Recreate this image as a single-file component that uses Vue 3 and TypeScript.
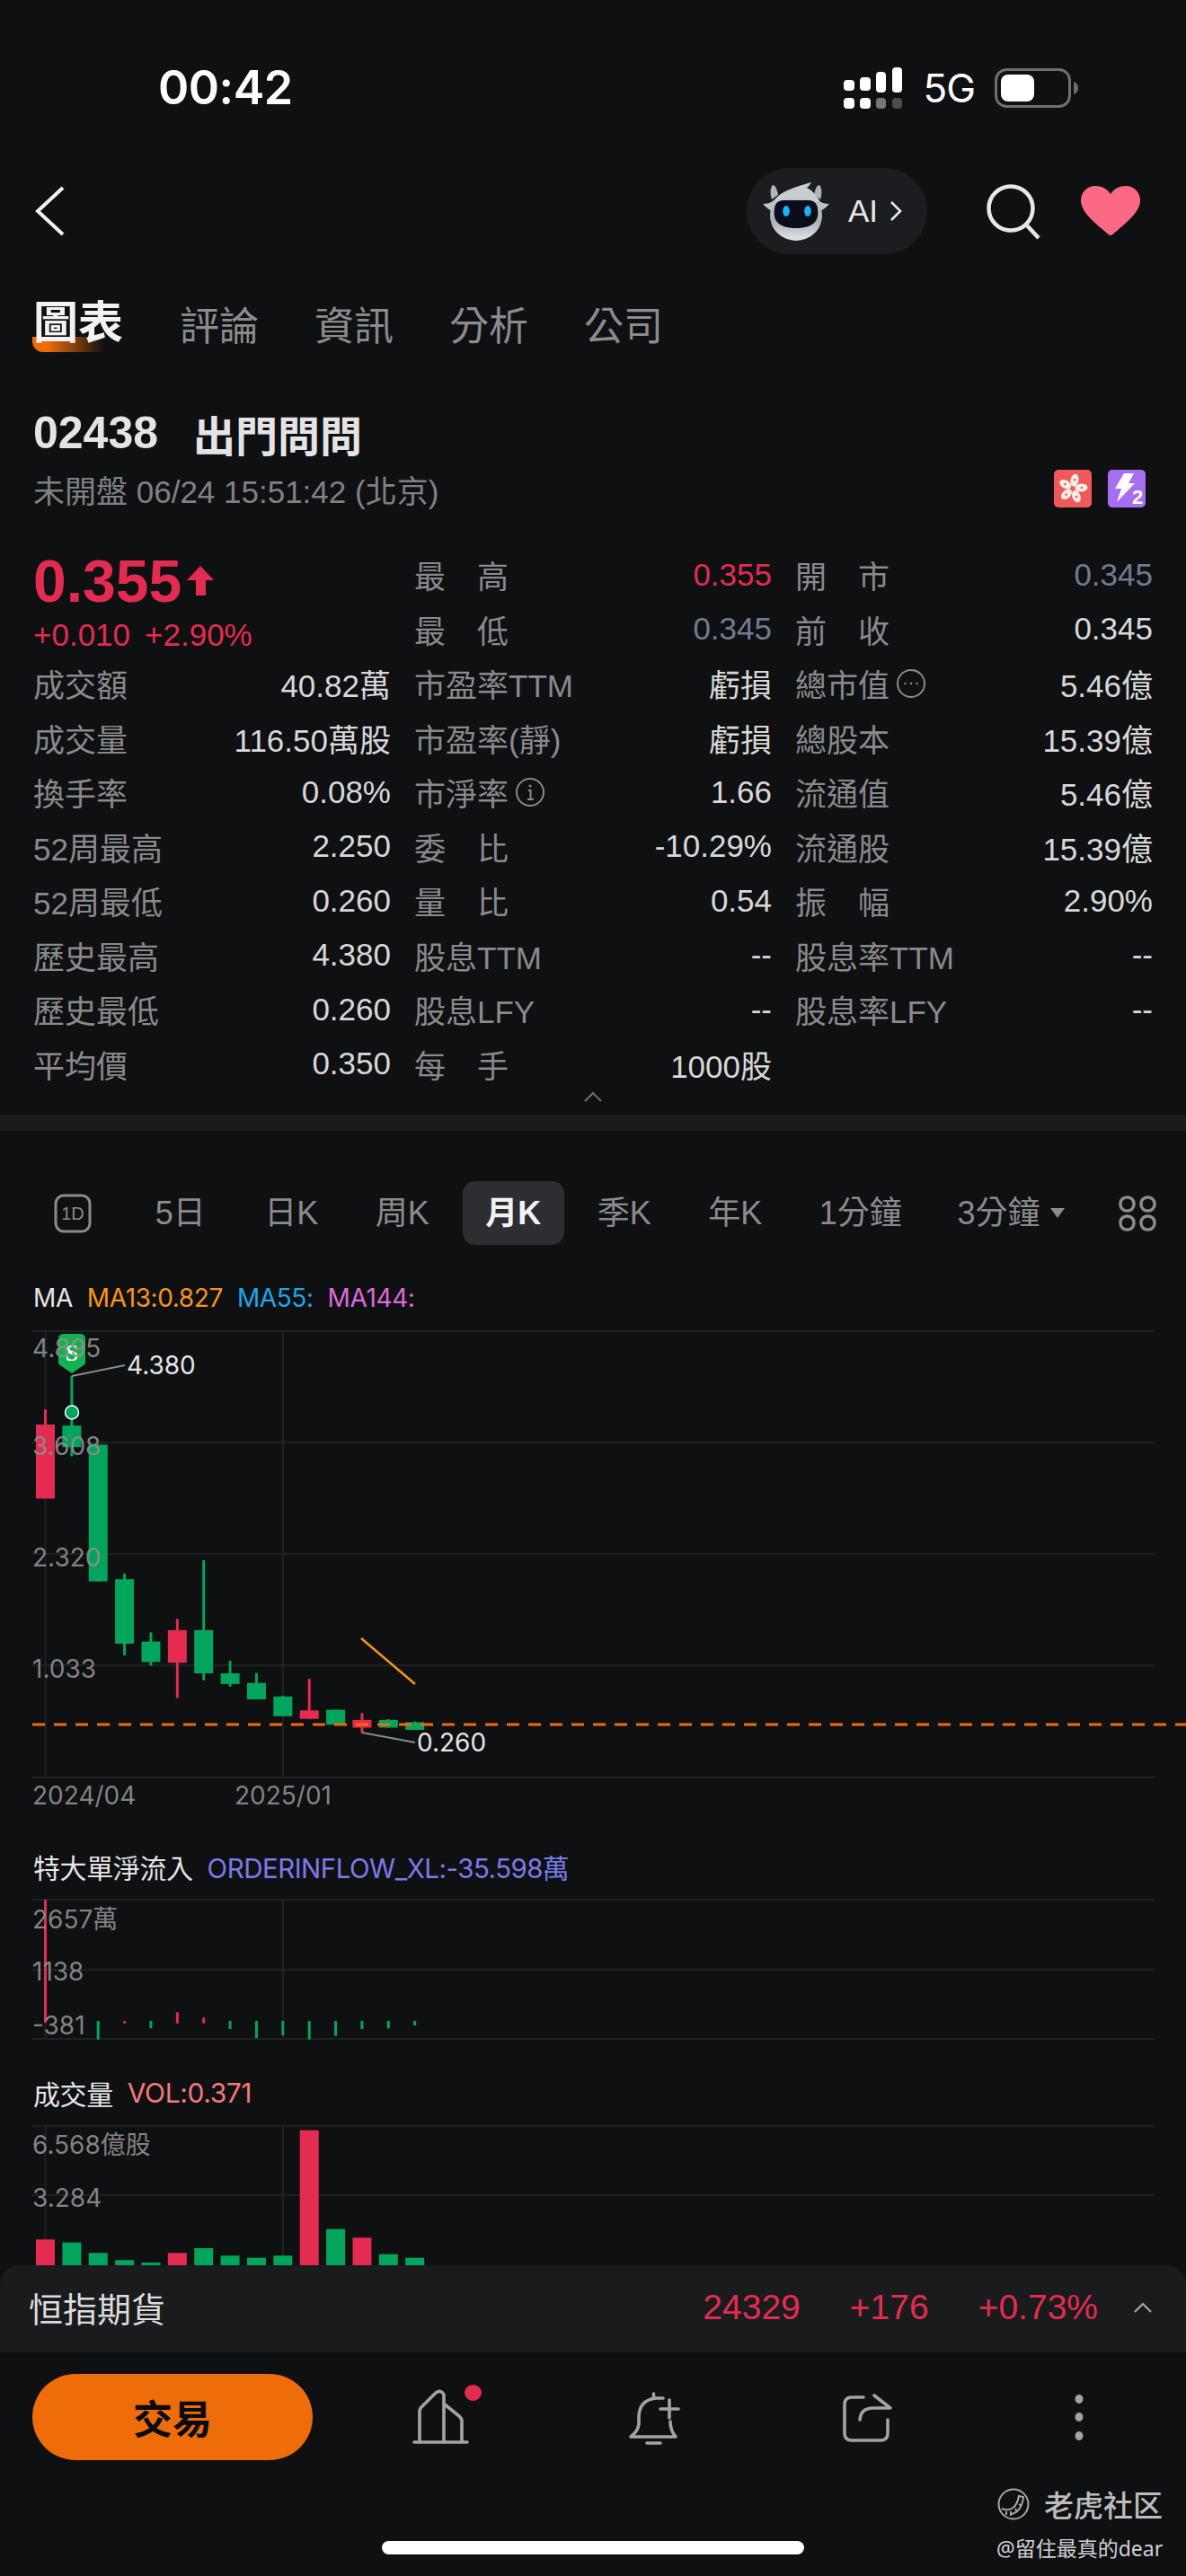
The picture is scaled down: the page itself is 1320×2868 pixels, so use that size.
<script setup lang="ts">
// Stock detail screen: quote header, stats table and monthly K chart.

type Tone = 'up' | 'down' | '';

interface Stat {
  label?: string;
  value?: string;
  tone?: Tone;
  icon?: 'more' | 'info';
  price?: boolean;
}

interface Candle {
  top: number;
  bottom: number;
  high: number;
  low: number;
  up: boolean;
}

const RED = '#e32c4f';
const GREEN = '#02a55b';

const tabs = ['評論', '資訊', '分析', '公司'];
const periods = ['5日', '日K', '周K', '月K', '季K', '年K', '1分鐘'];

const stats: Stat[] = [
  { price: true },
  { label: '最　高', value: '0.355', tone: 'up' },
  { label: '開　市', value: '0.345', tone: 'down' },
  { label: '最　低', value: '0.345', tone: 'down' },
  { label: '前　收', value: '0.345' },
  { label: '成交額', value: '40.82萬' },
  { label: '市盈率TTM', value: '虧損' },
  { label: '總市值', value: '5.46億', icon: 'more' },
  { label: '成交量', value: '116.50萬股' },
  { label: '市盈率(靜)', value: '虧損' },
  { label: '總股本', value: '15.39億' },
  { label: '換手率', value: '0.08%' },
  { label: '市淨率', value: '1.66', icon: 'info' },
  { label: '流通值', value: '5.46億' },
  { label: '52周最高', value: '2.250' },
  { label: '委　比', value: '-10.29%' },
  { label: '流通股', value: '15.39億' },
  { label: '52周最低', value: '0.260' },
  { label: '量　比', value: '0.54' },
  { label: '振　幅', value: '2.90%' },
  { label: '歷史最高', value: '4.380' },
  { label: '股息TTM', value: '--' },
  { label: '股息率TTM', value: '--' },
  { label: '歷史最低', value: '0.260' },
  { label: '股息LFY', value: '--' },
  { label: '股息率LFY', value: '--' },
  { label: '平均價', value: '0.350' },
  { label: '每　手', value: '1000股' },
  {},
];

// x centre of the nth month on all three panels
const barX = (i: number): number => 50.5 + i * 29.37;

const candles: Candle[] = [
  { top: 1587, bottom: 1669.4, high: 1570.2, low: 1669.4, up: true },
  { top: 1588.2, bottom: 1612.2, high: 1532.7, low: 1622.4, up: false },
  { top: 1609.4, bottom: 1761.6, high: 1609.4, low: 1761.6, up: false },
  { top: 1759.2, bottom: 1831, high: 1753, low: 1844, up: false },
  { top: 1828.6, bottom: 1851.4, high: 1818.4, low: 1855.5, up: false },
  { top: 1815.9, bottom: 1852.2, high: 1803.3, low: 1891.4, up: true },
  { top: 1815.9, bottom: 1864, high: 1738, low: 1871.8, up: false },
  { top: 1864, bottom: 1875.9, high: 1850.2, low: 1878.8, up: false },
  { top: 1874.7, bottom: 1893, high: 1863.7, low: 1893, up: false },
  { top: 1889.8, bottom: 1911.8, high: 1889, low: 1911.8, up: false },
  { top: 1905.3, bottom: 1914.7, high: 1870.2, low: 1914.7, up: true },
  { top: 1904.5, bottom: 1921.2, high: 1904.5, low: 1921.2, up: false },
  { top: 1915.9, bottom: 1924.5, high: 1908.2, low: 1930.6, up: true },
  { top: 1915.9, bottom: 1924.5, high: 1915, low: 1924.5, up: false },
  { top: 1918.4, bottom: 1927, high: 1917.6, low: 1927, up: false },
];

const inflow = [
  { i: 0, top: 2116, bottom: 2253, up: true },
  { i: 2, top: 2251, bottom: 2271.7, up: false },
  { i: 3, top: 2251, bottom: 2253.7, up: true },
  { i: 4, top: 2251, bottom: 2259.3, up: false },
  { i: 5, top: 2241.3, bottom: 2253.7, up: true },
  { i: 6, top: 2247.3, bottom: 2253.7, up: true },
  { i: 7, top: 2251, bottom: 2260, up: false },
  { i: 8, top: 2251, bottom: 2270.3, up: false },
  { i: 9, top: 2251, bottom: 2267, up: false },
  { i: 10, top: 2251, bottom: 2271.7, up: false },
  { i: 11, top: 2251, bottom: 2267.7, up: false },
  { i: 12, top: 2251, bottom: 2260, up: false },
  { i: 13, top: 2251, bottom: 2259.3, up: false },
  { i: 14, top: 2251, bottom: 2256, up: false },
];

const volumeTops = [
  2494.3, 2497.7, 2509.3, 2517.3, 2520, 2509.3, 2504, 2512.3, 2514.7, 2512.3, 2372.7, 2482.7,
  2492.3, 2510.7, 2514.7,
];
const VOLUME_BASE = 2523;
</script>

<template>
  <div class="page">
    <header class="status">
      <span class="clock">00:42</span>
      <div class="status-right">
        <svg class="signal" width="66" height="46" viewBox="0 0 66 46" fill="#fff">
          <rect x="0" y="14" width="12" height="12" rx="4" />
          <rect x="18" y="11" width="12" height="15" rx="4" />
          <rect x="36" y="5" width="11" height="23" rx="4" />
          <rect x="54" y="0" width="11" height="28" rx="4" />
          <rect x="0" y="34" width="12" height="12" rx="4" />
          <rect x="18" y="34" width="12" height="12" rx="4" />
          <rect x="36" y="34" width="11" height="12" rx="4" fill="#767676" />
          <rect x="54" y="34" width="11" height="12" rx="4" fill="#4c4c4c" />
        </svg>
        <span class="net">5G</span>
        <svg width="94" height="44" viewBox="0 0 94 44">
          <rect x="1.5" y="1.5" width="82" height="41" rx="12" fill="none" stroke="#6f6f6f" stroke-width="3" />
          <rect x="7" y="7" width="37" height="30" rx="8" fill="#fff" />
          <path d="M88 15c3 1 5 3.5 5 7s-2 6-5 7z" fill="#6f6f6f" />
        </svg>
      </div>
    </header>

    <nav class="topbar">
      <svg class="back" width="34" height="56" viewBox="0 0 34 56" fill="none" stroke="#f2f2f2" stroke-width="4">
        <path d="M31 2 3 28l28 26" />
      </svg>
      <div class="ai-pill">
        <svg width="76" height="66" viewBox="0 0 76 66">
          <defs>
            <linearGradient id="helmet" x1="0" y1="0" x2="0" y2="1">
              <stop offset="0" stop-color="#c9ced3" />
              <stop offset="0.6" stop-color="#aab0b6" />
              <stop offset="1" stop-color="#e3e6e9" />
            </linearGradient>
          </defs>
          <path d="M12 4c3 0 5 5 6 11L11 20C9 14 9 7 12 4zM64 4c-3 0-5 5-6 11l7 5c2-6 2-13-1-16z" fill="#aeb4ba" />
          <path d="M1 25c4 0 9-1 12-4l2 14C9 32 4 29 1 25zM75 25c-4 0-9-1-12-4l-2 14c6-3 11-6 14-10z" fill="#bfc4c9" />
          <ellipse cx="38" cy="38" rx="29" ry="28" fill="url(#helmet)" />
          <path d="M12 24C18 12 34 7 55 1c-2 4-4 5-5 6 6 3 12 9 15 17-14-7-38-7-53 0z" fill="#c9ced3" />
          <path d="M14 31c0-6 4-10 10-10h28c6 0 10 4 10 10 2 12-4 21-24 21S12 43 14 31z" fill="#0b0d1c" />
          <ellipse cx="27" cy="33" rx="3.8" ry="6" fill="#18b4f5" />
          <ellipse cx="51" cy="33" rx="3.8" ry="6" fill="#18b4f5" />
        </svg>
        <span class="ai-text">AI</span>
        <svg width="14" height="24" viewBox="0 0 14 24" fill="none" stroke="#e8e8e8" stroke-width="2.6">
          <path d="M2 2 12 12 2 22" />
        </svg>
      </div>
      <svg class="search" width="60" height="62" viewBox="0 0 60 62" fill="none" stroke="#e8e8e8" stroke-width="4.5">
        <circle cx="27" cy="27" r="24.5" />
        <path d="m44 45 14 15" />
      </svg>
      <svg class="heart" width="66" height="56" viewBox="0 0 66 56">
        <path
          d="M33 55c-1 0-2-.6-3-1.500C17 42 0 30 0 16 0 7 7 0 16 0c7 0 13 3 17 9 4-6 10-9 17-9 9 0 16 7 16 16 0 14-17 26-30 37.500-1 .9-2 1.500-3 1.500z"
          fill="#fb6982"
        />
      </svg>
    </nav>

    <div class="tabs">
      <span class="tab-active">
        <i class="tab-mark"></i>
        <b>圖表</b>
      </span>
      <span v-for="t in tabs" :key="t" class="tab">{{ t }}</span>
    </div>

    <section class="title">
      <div class="name"><span class="code">02438</span><span>出門問問</span></div>
      <div class="sub">
        <span>未開盤 06/24 15:51:42 (北京)</span>
        <div class="badges">
          <svg width="42" height="42" viewBox="0 0 42 42">
            <rect width="42" height="42" rx="5" fill="#f0595a" />
            <g fill="#fbeee8">
              <ellipse v-for="a in [0, 72, 144, 216, 288]" :key="a" cx="21" cy="11.5" rx="4.5" ry="7"
                :transform="`rotate(${a + 12} 21 21)`" />
            </g>
            <g fill="#f0595a">
              <circle v-for="a in [0, 72, 144, 216, 288]" :key="a" cx="21" cy="11" r="1.3"
                :transform="`rotate(${a + 12} 21 21)`" />
            </g>
          </svg>
          <svg width="42" height="42" viewBox="0 0 42 42">
            <rect width="42" height="42" rx="5" fill="#a56ff0" />
            <path d="M18 4h11l-6 11h7L10 36l5-15H8z" fill="#fff" />
            <text x="27" y="38" class="badge-num">2</text>
          </svg>
        </div>
      </div>
    </section>

    <section class="stats">
      <template v-for="(s, i) in stats" :key="i">
        <div v-if="s.price" class="price-cell">
          <div class="price">
            <span>0.355</span>
            <svg width="30" height="33" viewBox="0 0 30 33" fill="#e32c4f">
              <path d="M15 0 30 16H21V33H10V16H0z" />
            </svg>
          </div>
          <div class="change"><span>+0.010</span><span>+2.90%</span></div>
        </div>
        <div v-else class="cell">
          <span class="label">
            {{ s.label }}
            <svg v-if="s.icon === 'more'" class="hint" width="34" height="34" viewBox="0 0 34 34" fill="none" stroke="#8a8a8c" stroke-width="2">
              <circle cx="17" cy="17" r="15" />
              <circle cx="10.5" cy="17" r="1.2" fill="#8a8a8c" stroke="none" />
              <circle cx="17" cy="17" r="1.2" fill="#8a8a8c" stroke="none" />
              <circle cx="23.5" cy="17" r="1.2" fill="#8a8a8c" stroke="none" />
            </svg>
            <svg v-if="s.icon === 'info'" class="hint" width="34" height="34" viewBox="0 0 34 34" fill="none" stroke="#8a8a8c" stroke-width="2">
              <circle cx="17" cy="17" r="15" />
              <path d="M15 15h2.500v10M14 25h7" />
              <circle cx="17" cy="10" r="1.5" fill="#8a8a8c" stroke="none" />
            </svg>
          </span>
          <span class="value" :class="s.tone">{{ s.value }}</span>
        </div>
      </template>
    </section>

    <div class="collapse">
      <svg width="22" height="12" viewBox="0 0 22 12" fill="none" stroke="#6d6e70" stroke-width="2">
        <path d="m2 11 9-9 9 9" />
      </svg>
    </div>
    <div class="band"></div>

    <div class="periods">
      <svg class="period-1d" width="42" height="44" viewBox="0 0 42 44" fill="none" stroke="#8a8b8d" stroke-width="3">
        <rect x="2" y="2" width="38" height="40" rx="9" />
        <text x="21" y="29" class="oned">1D</text>
      </svg>
      <span v-for="p in periods" :key="p" class="period" :class="{ on: p === '月K' }">{{ p }}</span>
      <span class="period more">3分鐘<i class="tri"></i></span>
      <svg class="period-grid" width="42" height="40" viewBox="0 0 42 40" fill="none" stroke="#8a8b8d" stroke-width="3.5">
        <rect x="2" y="2" width="15" height="15" rx="7" />
        <rect x="25" y="2" width="15" height="15" rx="7" />
        <rect x="2" y="23" width="15" height="15" rx="7" />
        <rect x="25" y="23" width="15" height="15" rx="7" />
      </svg>
    </div>

    <div class="legend first">
      <span class="white">MA</span>
      <span class="orange">MA13:0.827</span>
      <span class="blue">MA55:</span>
      <span class="pink">MA144:</span>
    </div>
    <svg class="chart" width="1320" height="578" viewBox="0 1472 1320 578">
      <g stroke="#1e2022" stroke-width="2">
        <path v-for="y in [1483, 1607, 1731, 1855, 1980]" :key="y" :d="`M36 ${y}H1285`" />
        <path d="M50.5 1483V1980M315 1483V1980" />
      </g>
      <g v-for="(c, i) in candles" :key="i" :fill="c.up ? RED : GREEN">
        <rect :x="barX(i) - 1.5" :y="c.high" width="3" :height="c.low - c.high" />
        <rect :x="barX(i) - 10.5" :y="c.top" width="21" :height="c.bottom - c.top" />
      </g>
      <path d="M36 1921H1320" stroke="#f46a0a" stroke-width="3" stroke-dasharray="14 10" />
      <path d="M402 1825 462 1876" stroke="#f7941d" stroke-width="2.5" />
      <path d="M80 1533 139 1521M403 1930 462 1941" stroke="#8a8a8a" stroke-width="2" fill="none" />
      <path d="M65 1492q0-6 6-6h18q6 0 6 6v26q0 2-2 3l-13 9-13-9q-2-1-2-3z" fill="#12b24f" />
      <text x="80" y="1516" class="s-mark">S</text>
      <circle cx="80" cy="1573.5" r="7.5" fill="#02a55b" stroke="#fff" stroke-width="1.5" />
      <g class="axis">
        <text x="36" y="1512">4.895</text>
        <text x="36" y="1621">3.608</text>
        <text x="36" y="1745">2.320</text>
        <text x="36" y="1869">1.033</text>
        <text x="36" y="2010">2024/04</text>
        <text x="315" y="2010" text-anchor="middle">2025/01</text>
      </g>
      <text x="141" y="1531" class="mark">4.380</text>
      <text x="464" y="1951" class="mark">0.260</text>
    </svg>

    <div class="legend second">
      <span class="white">特大單淨流入</span>
      <span class="violet">ORDERINFLOW_XL:-35.598萬</span>
    </div>
    <svg class="chart" width="1320" height="190" viewBox="0 2110 1320 190">
      <g stroke="#1e2022" stroke-width="2">
        <path v-for="y in [2116, 2194, 2271]" :key="y" :d="`M36 ${y}H1285`" />
        <path d="M50.5 2116V2271M315 2116V2271" />
      </g>
      <rect v-for="b in inflow" :key="b.i" :x="barX(b.i) - 1.5" :y="b.top" width="3" :height="b.bottom - b.top" :fill="b.up ? RED : GREEN" />
      <g class="axis">
        <text x="36" y="2148">2657萬</text>
        <text x="36" y="2206">1138</text>
        <text x="36" y="2266">-381</text>
      </g>
    </svg>

    <div class="legend third">
      <span class="white">成交量</span>
      <span class="salmon">VOL:0.371</span>
    </div>
    <svg class="chart" width="1320" height="165" viewBox="0 2358 1320 165">
      <g stroke="#1e2022" stroke-width="2">
        <path v-for="y in [2368, 2445]" :key="y" :d="`M36 ${y}H1285`" />
        <path d="M50.5 2368V2523M315 2368V2523" />
      </g>
      <rect v-for="(t, i) in volumeTops" :key="i" :x="barX(i) - 10.5" :y="t" width="21" :height="VOLUME_BASE - t"
        :fill="[0, 5, 10, 12].includes(i) ? RED : GREEN" />
      <g class="axis">
        <text x="36" y="2399">6.568億股</text>
        <text x="36" y="2458">3.284</text>
      </g>
    </svg>

    <div class="futures">
      <span class="fut-name">恒指期貨</span>
      <span class="fut-nums">
        <span>24329</span>
        <span>+176</span>
        <span>+0.73%</span>
      </span>
      <svg width="20" height="12" viewBox="0 0 20 12" fill="none" stroke="#a9aaac" stroke-width="2">
        <path d="m1 11 9-9 9 9" />
      </svg>
    </div>

    <footer class="toolbar">
      <button class="trade">交易</button>
      <svg class="tool-svg" width="1320" height="100" viewBox="0 2640 1320 100" fill="none" stroke="#a3a3a3" stroke-width="3.6" stroke-linecap="round" stroke-linejoin="round">
        <path d="M461 2720H520M467 2719V2685q0-2 2-4l16-16q6-4 9 2V2719M495 2678l16 13q3 3 3 5V2719" />
        <ellipse cx="526.5" cy="2665" rx="9.5" ry="9" fill="#e32c4f" stroke="none" />
        <path d="M727.5 2666V2671M738 2671H730Q712 2673 711 2691V2700Q710 2708 702 2714H752Q746 2707 746 2697M745 2673V2693M735 2683H755M720 2721H735" />
        <path d="M961 2670H948Q940 2670 940 2678V2710Q940 2718 948 2718H980Q988 2718 988 2710V2695M973 2668 991 2682H972Q958 2682 957 2695" />
        <g fill="#a3a3a3" stroke="none">
          <ellipse cx="1201" cy="2672" rx="4.5" ry="5" />
          <ellipse cx="1201" cy="2692" rx="4.5" ry="5" />
          <ellipse cx="1201" cy="2713" rx="4.5" ry="5" />
        </g>
      </svg>
    </footer>

    <div class="watermark">
      <div class="wm-top">
        <svg width="36" height="38" viewBox="0 0 36 38" fill="none" stroke="#a6a6a6" stroke-width="2">
          <circle cx="18" cy="19" r="16.5" />
          <path d="M5 24c10 4 17-2 19-14l5 1c-1 11-7 19-15 19" />
          <path d="M10 27v4M15 27v5M20 24l2 4M24 19l3 2" />
        </svg>
        <span>老虎社区</span>
      </div>
      <div class="wm-user">@留住最真的dear</div>
    </div>
    <div class="home-bar"></div>
  </div>
</template>

<style>
html,
body {
  margin: 0;
  background: #0f1012;
}
</style>

<style scoped>
.page {
  position: relative;
  width: 1320px;
  height: 2868px;
  overflow: hidden;
  background: #0f1012;
  color: #d8d8d8;
  font-family: 'Liberation Sans', 'Noto Sans CJK TC', sans-serif;
}
.status {
  height: 179px;
  padding-top: 8px;
  display: flex;
  align-items: center;
  justify-content: space-between;
  padding-left: 176px;
  padding-right: 119px;
}
.clock {
  font-family: Inter, sans-serif;
  font-size: 52px;
  font-weight: 600;
  letter-spacing: -0.5px;
  color: #fff;
}
.status-right {
  display: flex;
  align-items: center;
}
.signal {
  margin-right: 22px;
}
.net {
  font-family: Inter, sans-serif;
  font-size: 44px;
  color: #fff;
  margin-right: 22px;
  letter-spacing: -1px;
}
.topbar {
  height: 96px;
  display: flex;
  align-items: center;
  padding-left: 39px;
}
.ai-pill {
  margin-left: 758px;
  width: 201px;
  height: 96px;
  border-radius: 48px;
  background: #1c1d20;
  display: flex;
  align-items: center;
  padding-left: 17px;
  box-sizing: border-box;
}
.ai-text {
  margin-left: 20px;
  margin-right: 13px;
  font-size: 35px;
  color: #e8e8e8;
}
.search {
  margin-left: 66px;
  margin-top: 2px;
}
.heart {
  margin-left: 45px;
}
.tabs {
  margin-top: 47px;
  height: 60px;
  margin-bottom: 62px;
  display: flex;
  align-items: center;
  gap: 62px;
  padding-left: 37px;
}
.tab-active {
  position: relative;
  font-size: 50px;
  line-height: 60px;
  color: #f2f2f2;
  margin-right: 1px;
}
.tab-active b {
  position: relative;
  font-weight: 700;
}
.tab-mark {
  position: absolute;
  left: -1px;
  top: 45px;
  width: 80px;
  height: 17px;
  border-radius: 0 0 0 12px;
  background: linear-gradient(90deg, #ee6c0a 20%, rgba(238, 108, 10, 0));
}
.tab {
  font-size: 44px;
  color: #8b8c8e;
}
.title {
  padding: 0 45px 0 37px;
  margin-top: -1px;
  margin-bottom: 1px;
}
.name {
  height: 62px;
  display: flex;
  align-items: center;
  gap: 39px;
  font-size: 47px;
  font-weight: 700;
  color: #e4e4e4;
}
.code {
  font-size: 50px;
}
.sub {
  height: 62px;
  display: flex;
  align-items: center;
  justify-content: space-between;
  font-size: 35px;
  color: #808184;
}
.badges {
  display: flex;
  gap: 18px;
}
.badge-num {
  font-size: 22px;
  font-weight: 700;
  fill: #fff;
}
.stats {
  margin-top: 34.5px;
  padding: 0 35px 0 37px;
  display: grid;
  grid-template-columns: 398px 398px 398px;
  column-gap: 26px;
  grid-auto-rows: 60.5px;
  font-size: 35px;
}
.price-cell {
  grid-row: span 2;
}
.price {
  display: flex;
  align-items: center;
  gap: 6px;
  height: 74px;
  font-size: 66px;
  font-weight: 700;
  color: #e32c4f;
}
.change {
  display: flex;
  gap: 16px;
  margin-top: 1px;
  line-height: 44px;
  color: #e32c4f;
  font-size: 35px;
}
.cell {
  display: flex;
  align-items: center;
  justify-content: space-between;
  white-space: nowrap;
}
.label {
  display: flex;
  align-items: center;
  color: #8a8a8c;
}
.hint {
  margin-left: 7px;
}
.value {
  color: #d8d8d8;
}
.value.up {
  color: #e32c4f;
}
.value.down {
  color: #6f7c8e;
}
.collapse {
  height: 26.5px;
  display: flex;
  align-items: flex-start;
  justify-content: center;
}
.band {
  height: 18px;
  background: #1a1b1d;
}
.periods {
  margin-top: 56px;
  height: 71px;
  display: flex;
  align-items: center;
  position: relative;
  font-size: 36px;
  color: #8a8b8d;
}
.period-1d {
  margin-left: 60px;
  margin-right: 52px;
}
.oned {
  font-family: 'Liberation Sans', sans-serif;
  font-size: 20px;
  font-weight: 400;
  text-anchor: middle;
  fill: #8a8b8d;
  stroke: none;
}
.period {
  width: 123.5px;
  height: 71px;
  line-height: 71px;
  text-align: center;
  border-radius: 14px;
  flex-shrink: 0;
  white-space: nowrap;
}
.period:first-of-type {
  margin-left: -15px;
}
.period:nth-of-type(7) {
  margin-left: 16px;
}
.period.on {
  width: 113px;
  margin: 0 5.25px;
  background: #2c2e32;
  color: #f2f2f2;
  font-weight: 700;
}
.period.more {
  margin-left: 46px;
  width: 125px;
  text-align: left;
  display: flex;
  align-items: center;
}
.tri {
  margin-left: 11px;
  width: 0;
  height: 0;
  border-left: 8px solid transparent;
  border-right: 8px solid transparent;
  border-top: 11px solid #8a8b8d;
}
.period-grid {
  position: absolute;
  left: 1245px;
  top: 16px;
}
.legend {
  display: flex;
  align-items: center;
  gap: 16px;
  padding-left: 37px;
  font-family: Inter, 'Noto Sans CJK TC', sans-serif;
  font-size: 28px;
  letter-spacing: -0.4px;
}
.legend.first {
  margin-top: 33px;
  height: 52px;
}
.legend.second {
  height: 58px;
  margin-bottom: 2px;
  font-size: 30px;
}
.legend.second .violet {
  font-size: 29.5px;
  letter-spacing: -0.5px;
}
.legend.third {
  margin-top: 6px;
  height: 50px;
  margin-bottom: 2px;
  font-size: 30px;
}
.white {
  color: #e6e6e6;
}
.orange {
  color: #f7941d;
}
.blue {
  color: #1aa7e8;
}
.pink {
  color: #de69dc;
}
.violet {
  color: #7b7be8;
}
.salmon {
  color: #f47a7a;
}
.chart {
  display: block;
}
.axis text {
  font-family: Inter, 'Noto Sans CJK TC', sans-serif;
  font-size: 28px;
  fill: #8f8f8f;
  fill-opacity: 0.92;
}
.mark {
  font-family: Inter, sans-serif;
  font-size: 28px;
  fill: #e6e6e6;
}
.s-mark {
  font-family: 'Liberation Serif', serif;
  font-size: 26px;
  font-weight: 700;
  text-anchor: middle;
  fill: #fff;
}
.futures {
  height: 97px;
  box-sizing: border-box;
  border-radius: 22px 22px 0 0;
  background: #1a1b1d;
  display: flex;
  align-items: center;
  padding: 0 38px 4px 32px;
  position: relative;
}
.fut-name {
  font-size: 38px;
  color: #dcdcdc;
}
.fut-nums {
  margin-left: auto;
  margin-right: 40px;
  display: flex;
  gap: 55px;
  font-size: 39px;
  color: #e32c4f;
}
.toolbar {
  padding-top: 24px;
  position: relative;
}
.trade {
  display: block;
  margin-left: 36px;
  width: 312px;
  height: 96px;
  border: 0;
  border-radius: 48px;
  background: #ee6c0a;
  color: #0b0b0b;
  font-family: inherit;
  font-size: 44px;
  font-weight: 700;
}
.tool-svg {
  position: absolute;
  left: 0;
  top: 20px;
}
.watermark {
  position: absolute;
  left: 1109px;
  top: 2767px;
}
.wm-top {
  display: flex;
  align-items: center;
  gap: 16px;
  margin-left: 1px;
  font-family: 'Noto Sans CJK SC', sans-serif;
  font-size: 33px;
  font-weight: 500;
  color: #bdbdbd;
  line-height: 42px;
}
.wm-user {
  margin-top: 13px;
  font-family: 'Noto Sans', 'Noto Sans CJK SC', sans-serif;
  font-size: 23px;
  line-height: 30px;
  color: #d2d2d2;
}
.home-bar {
  position: absolute;
  left: 425px;
  top: 2829px;
  width: 470px;
  height: 15px;
  border-radius: 8px;
  background: #fff;
}
</style>
